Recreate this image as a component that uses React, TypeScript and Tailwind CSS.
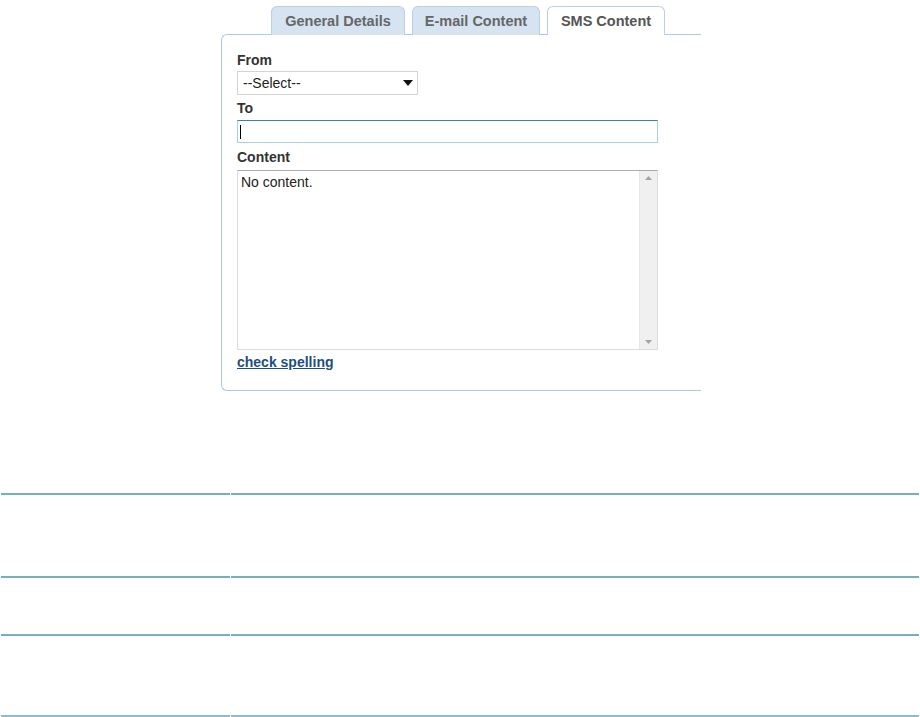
export default function App() {
  const tabs = [
    { label: "General Details", w: "w-[134px]", active: false },
    { label: "E-mail Content", w: "w-[128px]", active: false },
    { label: "SMS Content", w: "w-[118px]", active: true },
  ];

  const rows = ["h-[83px]", "h-[58px]", "h-[81px]"];

  return (
    <div className="min-h-[717px] bg-white font-['Liberation_Sans',Arial,sans-serif] text-[#333]">
      {/* Tabbed form */}
      <div className="ml-[221px] w-[480px] pt-[6px]">
        <div className="flex gap-[7px] pl-[50px]">
          {tabs.map((tab) => (
            <div
              key={tab.label}
              className={`${tab.w} h-[29px] -mb-px pt-[2px] rounded-t-[6px] border border-b-0 border-[#b7d0e8] flex items-center justify-center text-[14.5px] font-bold ${
                tab.active ? "bg-white text-[#555] relative z-10" : "bg-[#d6e3f0] text-[#666]"
              }`}
            >
              {tab.label}
            </div>
          ))}
        </div>

        <div className="border-l border-t border-b border-[#a9cbea] rounded-l-[6px] h-[357px] pl-[15px] pt-[17px]">
          <div className="text-[14px] font-bold leading-[16px]">From</div>
          <div className="mt-[3px] w-[181px] h-[24px] border border-[#d4d4d4] flex items-center justify-between pl-[5px] pr-[4px] text-[14px] text-[#222]">
            <span>--Select--</span>
            <svg width="10" height="6" viewBox="0 0 10 6">
              <path d="M0 0h10L5 6z" fill="#111" />
            </svg>
          </div>

          <div className="mt-[5px] text-[14px] font-bold leading-[16px]">To</div>
          <div className="mt-[4px] w-[421px] h-[23px] border border-[#a8cfec] border-t-[#3e7fb5] flex items-center pl-[2px]">
            <div className="w-px h-[14px] bg-black" />
          </div>

          <div className="mt-[6px] text-[14px] font-bold leading-[16px]">Content</div>
          <div className="mt-[5px] w-[421px] h-[180px] border border-[#dcdcdc] border-t-[#ababab] flex">
            <div className="flex-1 pl-[3px] pt-[3px] text-[14px] leading-[17px] text-[#222]">No content.</div>
            <div className="w-[18px] bg-[#f0f0f0] border-l border-[#e6e6e6] flex flex-col justify-between items-center py-[5px]">
              <svg width="7" height="4" viewBox="0 0 7 4">
                <path d="M0 4h7L3.5 0z" fill="#a3a3a3" />
              </svg>
              <svg width="7" height="4" viewBox="0 0 7 4">
                <path d="M0 0h7L3.5 4z" fill="#a3a3a3" />
              </svg>
            </div>
          </div>

          <a href="#" className="inline-block mt-[4px] text-[14px] font-bold underline text-[#1c4f80] leading-[16px]">
            check spelling
          </a>
        </div>
      </div>

      {/* Lower table rows */}
      <div className="mt-[102px] px-px">
        {rows.map((h, i) => (
          <div key={i} className={`flex gap-px ${h}`}>
            <div className="w-[229px] border-t-2 border-[#76aec2]" />
            <div className="flex-1 border-t-2 border-[#76aec2]" />
          </div>
        ))}
        <div className="flex gap-px">
          <div className="w-[229px] border-t-2 border-[#8fbccc]" />
          <div className="flex-1 border-t-2 border-[#8fbccc]" />
        </div>
      </div>
    </div>
  );
}
